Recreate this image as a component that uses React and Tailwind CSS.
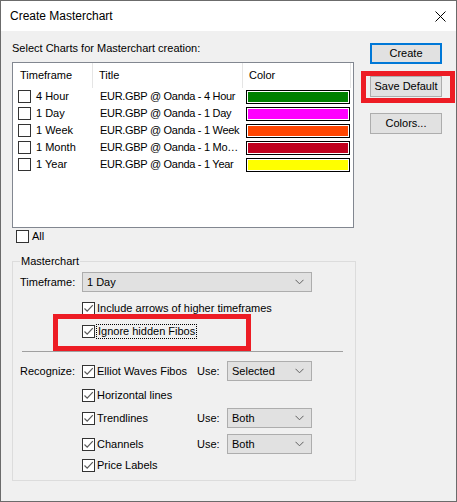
import React from 'react';

const FONT = { fontFamily: '"Liberation Sans", Arial, sans-serif' };

function Check({ checked }) {
  return (
    <span className="w-[13px] h-[13px] shrink-0 border border-[#333333] bg-white flex items-center justify-center">
      {checked && (
        <svg width="11" height="11" viewBox="0 0 11 11">
          <path d="M1.5 5.5 L4.2 8.2 L9.8 2.2" fill="none" stroke="#5a5a5a" strokeWidth="1.2" />
        </svg>
      )}
    </span>
  );
}

function Chevron() {
  return (
    <svg width="9" height="6" viewBox="0 0 9 6">
      <path d="M0.5 0.8 L4.5 4.8 L8.5 0.8" fill="none" stroke="#606060" strokeWidth="1" />
    </svg>
  );
}

function Select({ value, className }) {
  return (
    <div className={"h-[20px] border border-[#adadad] bg-[#e1e1e1] flex items-center justify-between pl-[4px] pr-[7px] " + className}>
      <span className="pt-[1px]">{value}</span>
      <Chevron />
    </div>
  );
}

function Button({ children, primary, className }) {
  return (
    <div
      className={
        "w-[72px] h-[21px] bg-[#e1e1e1] flex items-center justify-center " +
        (primary ? "border-2 border-[#0078d7] " : "border border-[#adadad] ") +
        className
      }
    >
      {children}
    </div>
  );
}

const charts = [
  { tf: '4 Hour', title: 'EUR.GBP @ Oanda - 4 Hour', color: 'bg-[#008000]' },
  { tf: '1 Day', title: 'EUR.GBP @ Oanda - 1 Day', color: 'bg-[#ff00ff]' },
  { tf: '1 Week', title: 'EUR.GBP @ Oanda - 1 Week', color: 'bg-[#ff4500]' },
  { tf: '1 Month', title: 'EUR.GBP @ Oanda - 1 Mo…', color: 'bg-[#c0001e]' },
  { tf: '1 Year', title: 'EUR.GBP @ Oanda - 1 Year', color: 'bg-[#ffff00]' },
];

function RecRow({ label, text, use, className }) {
  return (
    <div className={"flex items-center h-[20px] pl-[7px] " + className}>
      <span className="w-[62px]">{label}</span>
      <Check checked />
      <span className="w-[102px] pl-[2px] whitespace-nowrap">{text}</span>
      {use && (
        <>
          <span className="w-[30px]">Use:</span>
          <Select value={use} className="w-[85px]" />
        </>
      )}
    </div>
  );
}

export default function App() {
  return (
    <div style={FONT} className="relative w-[457px] h-[502px] border border-[#6b6b6b] bg-[#f0f0f0] text-[11px] text-black flex flex-col overflow-hidden">
      {/* title bar */}
      <div className="h-[30px] bg-white flex items-center justify-between pl-[9px] pr-[10px]">
        <span className="text-[12px]">Create Masterchart</span>
        <svg width="11" height="11" viewBox="0 0 11 11">
          <path d="M0.5 0.5 L10.5 10.5 M10.5 0.5 L0.5 10.5" stroke="#000" strokeWidth="1" />
        </svg>
      </div>

      <div className="flex">
        {/* left column */}
        <div className="w-[356px] pl-[11px] flex flex-col">
          <div className="mt-[9px] h-[16px] leading-[16px]">Select Charts for Masterchart creation:</div>

          {/* list view */}
          <div className="mt-[6px] w-[342px] h-[166px] border border-[#828790] bg-white flex flex-col">
            <div className="h-[25px] flex">
              <div className="w-[80px] pl-[7px] flex items-center border-r border-[#e5e5e5]">Timeframe</div>
              <div className="w-[150px] pl-[6px] flex items-center border-r border-[#e5e5e5]">Title</div>
              <div className="w-[108px] pl-[6px] flex items-center border-r border-[#e5e5e5]">Color</div>
            </div>
            {charts.map((c) => (
              <div key={c.tf} className="h-[17px] flex items-center">
                <div className="w-[81px] pl-[5px] flex items-center gap-[5px]">
                  <Check />
                  <span>{c.tf}</span>
                </div>
                <div className="w-[152px] pl-[6px] whitespace-nowrap overflow-hidden tracking-[-0.3px]">{c.title}</div>
                <div className="w-[104px] h-[14px] border border-black bg-white p-[1px]">
                  <div className={"h-full " + c.color} />
                </div>
              </div>
            ))}
          </div>

          <div className="mt-[2px] ml-[4px] h-[13px] flex items-center gap-[3px]">
            <Check />
            <span>All</span>
          </div>

          {/* group box */}
          <div className="relative mt-[18px] w-[344px] h-[220px] border border-[#dcdcdc] flex flex-col">
            <span className="absolute left-[7px] top-[-9px] px-[1px] bg-[#f0f0f0] leading-[16px]">Masterchart</span>

            <div className="mt-[10px] pl-[7px] flex items-center h-[20px]">
              <span className="w-[62px]">Timeframe:</span>
              <Select value="1 Day" className="w-[230px]" />
            </div>

            <div className="mt-[10px] ml-[69px] h-[13px] flex items-center">
              <Check checked />
              <span className="ml-[2px]">Include arrows of higher timeframes</span>
            </div>
            <div className="mt-[10px] ml-[69px] h-[13px] flex items-center">
              <Check checked />
              <span className="ml-[1px] px-[1px] border border-dotted border-black leading-[13px]">Ignore hidden Fibos</span>
            </div>

            <div className="mt-[13px] ml-[9px] w-[321px] border-t border-[#a0a0a0]" />

            <RecRow label="Recognize:" text="Elliot Waves Fibos" use="Selected" className="mt-[9px]" />
            <RecRow label="" text="Horizontal lines" className="mt-[4px]" />
            <RecRow label="" text="Trendlines" use="Both" className="mt-[3px]" />
            <RecRow label="" text="Channels" use="Both" className="mt-[6px]" />
            <RecRow label="" text="Price Labels" className="mt-[1px]" />
          </div>
        </div>

        {/* right column */}
        <div className="ml-[13px] flex flex-col">
          <Button primary className="mt-[12px]">Create</Button>
          <Button className="mt-[12px]">Save Default</Button>
          <Button className="mt-[16px]">Colors...</Button>
        </div>
      </div>

      {/* red annotation frames */}
      <div className="absolute left-[360px] top-[70px] w-[94px] h-[32px] border-[5px] border-[#ed1c24]" />
      <div className="absolute left-[52px] top-[313px] w-[198px] h-[37px] border-[5px] border-[#ed1c24]" />
    </div>
  );
}
